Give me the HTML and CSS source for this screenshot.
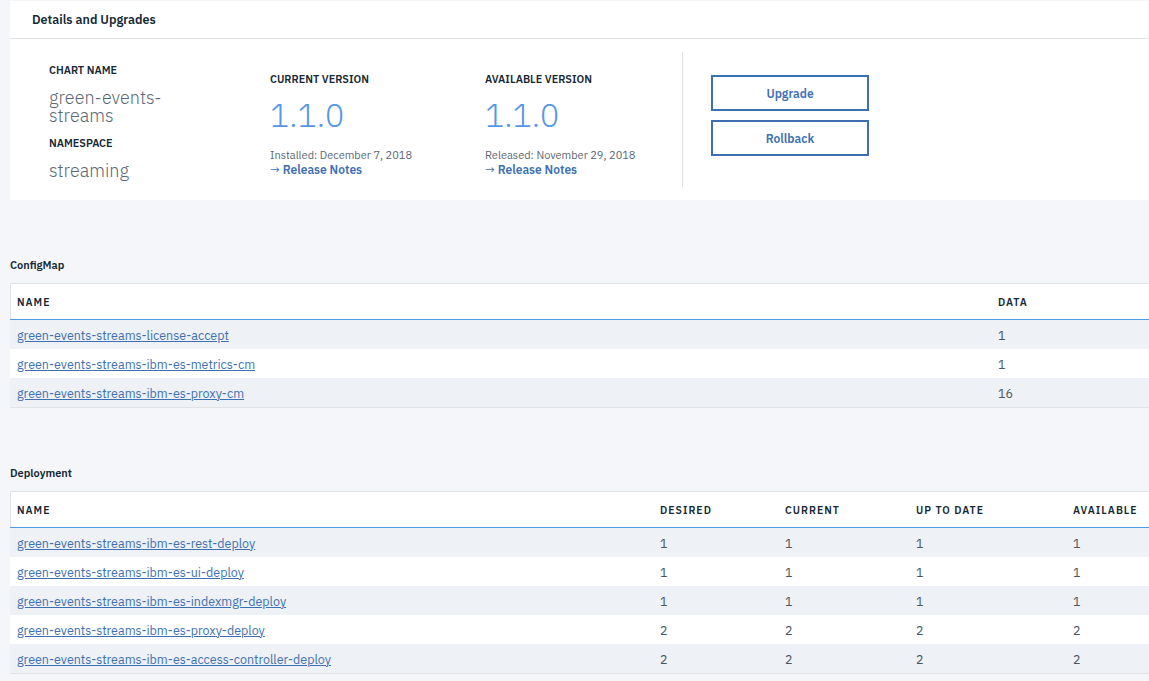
FILE: index.html
```html
<!DOCTYPE html>
<html>
<head>
<meta charset="utf-8">
<link rel="stylesheet" href="styles.css">
</head>
<body>
<div class="page">
  <section class="card">
    <div class="card-header">Details and Upgrades</div>
    <div class="card-body">
      <div class="col col-name">
        <div class="label">Chart name</div>
        <div class="value">green-events-streams</div>
        <div class="label label-ns">Namespace</div>
        <div class="value">streaming</div>
      </div>
      <div class="col col-ver">
        <div class="label">Current version</div>
        <div class="version">1.1.0</div>
        <div class="meta">Installed: December 7, 2018</div>
        <a class="notes" href="#"><span class="arrow">→</span> Release Notes</a>
      </div>
      <div class="col col-ver col-avail">
        <div class="label">Available version</div>
        <div class="version">1.1.0</div>
        <div class="meta">Released: November 29, 2018</div>
        <a class="notes" href="#"><span class="arrow">→</span> Release Notes</a>
      </div>
      <div class="actions">
        <button class="btn">Upgrade</button>
        <button class="btn">Rollback</button>
      </div>
    </div>
  </section>

  <h3 class="section-title title-cm">ConfigMap</h3>
  <table class="tbl">
    <colgroup><col style="width:981px"><col></colgroup>
    <thead><tr><th>Name</th><th>Data</th></tr></thead>
    <tbody>
      <tr><td><a href="#">green-events-streams-license-accept</a></td><td>1</td></tr>
      <tr><td><a href="#">green-events-streams-ibm-es-metrics-cm</a></td><td>1</td></tr>
      <tr><td><a href="#">green-events-streams-ibm-es-proxy-cm</a></td><td>16</td></tr>
    </tbody>
  </table>

  <h3 class="section-title title-dep">Deployment</h3>
  <table class="tbl">
    <colgroup><col style="width:643px"><col style="width:125px"><col style="width:131px"><col style="width:157px"><col></colgroup>
    <thead><tr><th>Name</th><th>Desired</th><th>Current</th><th>Up to date</th><th>Available</th></tr></thead>
    <tbody>
      <tr><td><a href="#">green-events-streams-ibm-es-rest-deploy</a></td><td>1</td><td>1</td><td>1</td><td>1</td></tr>
      <tr><td><a href="#">green-events-streams-ibm-es-ui-deploy</a></td><td>1</td><td>1</td><td>1</td><td>1</td></tr>
      <tr><td><a href="#">green-events-streams-ibm-es-indexmgr-deploy</a></td><td>1</td><td>1</td><td>1</td><td>1</td></tr>
      <tr><td><a href="#">green-events-streams-ibm-es-proxy-deploy</a></td><td>2</td><td>2</td><td>2</td><td>2</td></tr>
      <tr><td><a href="#">green-events-streams-ibm-es-access-controller-deploy</a></td><td>2</td><td>2</td><td>2</td><td>2</td></tr>
    </tbody>
  </table>
</div>
</body>
</html>
```

FILE: styles.css
```css
html, body {
  margin: 0;
  padding: 0;
  background: #f4f6f9;
  font-family: "IBM Plex Sans", "Noto Sans", "Open Sans", sans-serif;
  color: #152935;
}

.page {
  padding: 1px 0 0 10px;
  overflow: hidden;
}

.card {
  background: #ffffff;
  margin-right: 1px;
}

.card-header {
  height: 37px;
  line-height: 37px;
  padding-left: 22px;
  font-size: 12.5px;
  font-weight: 600;
  border-bottom: 1px solid #dfe3e6;
}

.card-body {
  display: flex;
  padding: 13px 0 13px 39px;
}

.col-name {
  width: 221px;
  padding-top: 11px;
}

.col-ver {
  width: 215px;
  padding-top: 20px;
}

.col-avail {
  width: 197px;
}

.label {
  font-size: 10.8px;
  font-weight: 600;
  text-transform: uppercase;
  line-height: 14px;
  color: #152935;
}

.value {
  width: 130px;
  font-size: 18px;
  font-weight: 300;
  line-height: 18px;
  color: #5a6872;
  margin-top: 12px;
}

.col-name .value + .label-ns {
  margin-top: 11px;
}

.version {
  font-size: 32px;
  font-weight: 300;
  line-height: 40px;
  color: #5596e6;
  margin-top: 9px;
}

.meta {
  font-size: 11px;
  color: #5a6872;
  margin-top: 13px;
  line-height: 14px;
}

.notes {
  display: block;
  font-size: 12px;
  font-weight: 600;
  color: #3d70b2;
  text-decoration: none;
  line-height: 16px;
}

.arrow {
  font-weight: 400;
}

.actions {
  border-left: 1px solid #dfe3e6;
  padding: 23px 0 0 28px;
  height: 112px;
  display: flex;
  flex-direction: column;
  gap: 9px;
}

.btn {
  width: 158px;
  height: 36px;
  background: #ffffff;
  border: 2px solid #3d70b2;
  color: #3d70b2;
  font-family: inherit;
  font-size: 12px;
  font-weight: 600;
  padding: 0;
}

.section-title {
  margin: 0;
  font-size: 11px;
  font-weight: 600;
  line-height: 16px;
  color: #152935;
}

.title-cm {
  margin-top: 57px;
  margin-bottom: 10px;
}

.title-dep {
  margin-top: 57px;
  margin-bottom: 10px;
}

.tbl {
  width: 1139px;
  border-collapse: collapse;
  table-layout: fixed;
  font-size: 12.5px;
}

.tbl th {
  text-align: left;
  font-size: 10.5px;
  font-weight: 600;
  letter-spacing: 1px;
  text-transform: uppercase;
  height: 35px;
  padding: 0 0 0 7px;
  background: #ffffff;
  border-top: 1px solid #dfe3e6;
  border-bottom: 1px solid #5596e6;
  color: #152935;
}

.tbl th:first-child {
  box-shadow: inset 1px 0 0 #dfe3e6;
}

.tbl td {
  height: 29px;
  padding: 0 0 0 7px;
  color: #4a555e;
  font-size: 12.5px;
}

.tbl tbody tr:nth-child(odd) td {
  background: #eef1f5;
}

.tbl tbody tr:nth-child(even) td {
  background: #ffffff;
}

.tbl tbody tr:last-child td {
  border-bottom: 1px solid #dfe3e6;
}

.tbl td a {
  color: #3d70b2;
  text-decoration: underline;
}
```
